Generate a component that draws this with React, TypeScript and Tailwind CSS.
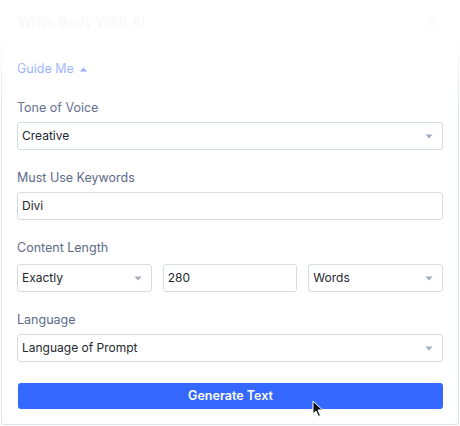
import * as React from 'react'

const Caret = () => (
    <svg width="8" height="5" viewBox="0 0 8 5" className="shrink-0">
        <path d="M0.5 0.5h7L4 4.5z" fill="#a3abbc" />
    </svg>
)

const Field = ({ label, children }: { label: string; children: React.ReactNode }) => (
    <div className="flex flex-col">
        <div className="h-[16px] text-[12.5px] leading-[16px] text-[#5c6b8a] mb-[6px]">{label}</div>
        {children}
    </div>
)

const Select = ({ value, className }: { value: string; className?: string }) => (
    <div
        className={
            'flex items-center justify-between h-[28px] rounded-[3px] border border-[#d7dbe3] bg-white pl-[4px] pr-[9px] text-[12px] text-[#23272f] ' +
            (className ?? '')
        }
    >
        <span>{value}</span>
        <Caret />
    </div>
)

const Input = ({ value, className }: { value: string; className?: string }) => (
    <div
        className={
            'flex items-center h-[28px] rounded-[3px] border border-[#d7dbe3] bg-white px-[4px] text-[12px] text-[#23272f] ' +
            (className ?? '')
        }
    >
        {value}
    </div>
)

export default function App() {
    return (
        <div className="relative w-[460px] h-[426px] bg-white font-['Inter',sans-serif] overflow-hidden">
            <div className="mx-[1px] h-[425px] border-x border-b border-[#dfe3ea] rounded-b-[3px] flex flex-col">
                {/* header */}
                <div className="flex items-center justify-between h-[43px] px-[16px] border-b border-[#e3e6ec]">
                    <span className="text-[14px] font-semibold text-[#2b3447]">Write Body With AI</span>
                    <svg width="11" height="11" viewBox="0 0 12 12" className="mr-[4px]">
                        <path d="M1.5 1.5l9 9M10.5 1.5l-9 9" stroke="#5c6b8a" strokeWidth="1.6" strokeLinecap="round" />
                    </svg>
                </div>

                <div className="flex flex-col px-[15px] pt-[18px]">
                    <div className="flex items-center gap-[6px] h-[16px] text-[12.5px] text-[#2f64ff]">
                        <span>Guide Me</span>
                        <svg width="7" height="5" viewBox="0 0 7 5">
                            <path d="M0 4.5h7L3.5 0.5z" fill="#2f64ff" />
                        </svg>
                    </div>

                    <div className="flex flex-col gap-[20px] mt-[23px]">
                        <Field label="Tone of Voice">
                            <Select value="Creative" />
                        </Field>
                        <Field label="Must Use Keywords">
                            <Input value="Divi" />
                        </Field>
                        <Field label="Content Length">
                            <div className="grid grid-cols-3 gap-[11px] mt-[2px]">
                                <Select value="Exactly" />
                                <Input value="280" />
                                <Select value="Words" />
                            </div>
                        </Field>
                        <Field label="Language">
                            <Select value="Language of Prompt" />
                        </Field>
                    </div>

                    <button className="mt-[21px] h-[26px] rounded-[3px] bg-[#3468ff] text-white text-[12.5px] font-semibold ml-[1px]">
                        Generate Text
                    </button>
                </div>
            </div>

            {/* fade over the top */}
            <div className="pointer-events-none absolute inset-x-0 top-0 h-[115px] bg-[linear-gradient(to_bottom,rgba(255,255,255,0.98)_0px,rgba(255,255,255,0.96)_38px,rgba(255,255,255,0.5)_70px,rgba(255,255,255,0)_112px)]" />

            {/* cursor */}
            <svg width="12" height="18" viewBox="0 0 12 18" className="absolute left-[312px] top-[400px]">
                <path d="M1 1v13l3-3 2.5 5.5 2-1L6 10h4.5z" fill="#111" stroke="#fff" strokeWidth="1" />
            </svg>
        </div>
    )
}
